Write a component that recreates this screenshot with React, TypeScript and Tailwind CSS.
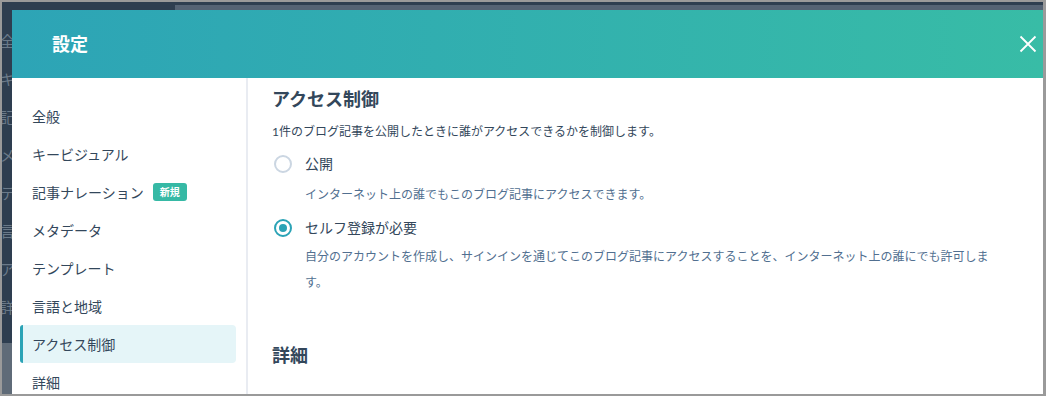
import React from 'react';

const navItems = [
  { label: '全般' },
  { label: 'キービジュアル' },
  { label: '記事ナレーション', badge: '新規' },
  { label: 'メタデータ' },
  { label: 'テンプレート' },
  { label: '言語と地域' },
  { label: 'アクセス制御', active: true },
  { label: '詳細' },
];

const ghost = ['全', 'キ', '記', 'メ', 'テ', '言', 'ア', '詳'];

const font = { fontFamily: 'Lato, "Noto Sans CJK JP", sans-serif' };

const Radio: React.FC<{ checked?: boolean }> = ({ checked }) => (
  <span
    className={`flex h-[18px] w-[18px] shrink-0 items-center justify-center rounded-full border-2 ${
      checked ? 'border-[#2ba3b6]' : 'border-[#cbd6e2]'
    } bg-white`}
  >
    {checked && <span className="h-2 w-2 rounded-full bg-[#2ba3b6]" />}
  </span>
);

const App: React.FC = () => {
  return (
    <div
      className="relative h-[396px] w-[1046px] overflow-hidden border-2 border-r-[3px] border-[#9a9a9a] bg-[#2e3e50]"
      style={font}
    >
      {/* Page behind the modal */}
      <div className="flex h-full">
        <div className="flex w-[10px] flex-col">
          <div className="flex flex-1 flex-col gap-[17px] overflow-hidden pt-[29px] text-[15px] leading-[21px] text-[#6b7a89]">
            {ghost.map((g) => (
              <span key={g} className="-ml-[2px]">{g}</span>
            ))}
          </div>
          <div className="h-[51px] bg-[#5f6b78]" />
        </div>
        <div className="flex-1">
          <div className="ml-[163px] mt-[3px] h-[5px] bg-[#556374]" />
        </div>
      </div>

      {/* Modal */}
      <div className="absolute left-[10px] top-[8px] right-0 bottom-0 flex flex-col bg-white">
        <div className="flex h-[68px] shrink-0 items-center justify-between bg-gradient-to-r from-[#2da4b6] to-[#38bca6] pl-[40px] pr-[6px]">
          <h1 className="text-[18px] font-bold text-white">設定</h1>
          <svg width="18" height="18" viewBox="0 0 18 18" fill="none" stroke="white" strokeWidth={1.8}>
            <path d="M1.5 1.5l15 15M16.5 1.5l-15 15" />
          </svg>
        </div>

        <div className="flex min-h-0 flex-1">
          <aside className="w-[236px] shrink-0 border-r-2 border-[#e9ecf2] pl-[8px] pr-[10px] pt-[19px]">
            {navItems.map((item) => (
              <div
                key={item.label}
                className={`relative flex h-[38px] items-center rounded-[4px] pl-[12px] text-[14px] text-[#33475b] ${
                  item.active ? 'bg-[#e5f5f8]' : ''
                }`}
              >
                {item.active && (
                  <span className="absolute left-0 top-0 h-full w-[3px] rounded-l-[4px] bg-[#2ba3b6]" />
                )}
                <span>{item.label}</span>
                {item.badge && (
                  <span className="ml-[9px] flex h-[18px] items-center rounded-[3px] bg-[#36b9a5] px-[7px] text-[10px] font-bold text-white">
                    {item.badge}
                  </span>
                )}
              </div>
            ))}
          </aside>

          <main className="flex-1 pl-[24px] pr-[40px] pt-[8px] text-[#33475b]">
            <h2 className="text-[18px] font-bold leading-[26px]">アクセス制御</h2>
            <p className="mt-[11px] text-[12px] leading-[18px]">
              1件のブログ記事を公開したときに誰がアクセスできるかを制御します。
            </p>

            <div className="mt-[13px] flex gap-[13px]">
              <div className="pt-[1px] pl-[2px]"><Radio /></div>
              <div>
                <div className="text-[14px] leading-[20px]">公開</div>
                <div className="mt-[12px] text-[12px] leading-[18px] text-[#516f90]">
                  インターネット上の誰でもこのブログ記事にアクセスできます。
                </div>
              </div>
            </div>

            <div className="mt-[14px] flex gap-[13px]">
              <div className="pt-[1px] pl-[2px]"><Radio checked /></div>
              <div className="max-w-[700px]">
                <div className="text-[14px] leading-[20px]">セルフ登録が必要</div>
                <div className="mt-[6px] text-[12px] leading-[26px] text-[#516f90]">
                  自分のアカウントを作成し、サインインを通じてこのブログ記事にアクセスすることを、インターネット上の誰にでも許可します。
                </div>
              </div>
            </div>

            <h2 className="mt-[46px] text-[18px] font-bold leading-[26px]">詳細</h2>
          </main>
        </div>
      </div>
    </div>
  );
};

export default App;
